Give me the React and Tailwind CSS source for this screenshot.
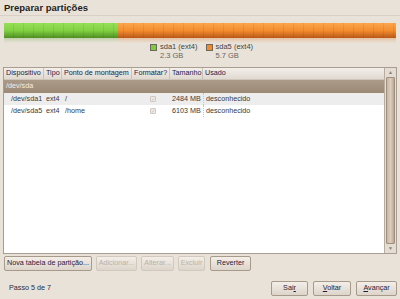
import React from "react";

const font = { fontFamily: '"Liberation Sans", "DejaVu Sans", sans-serif' };

function Bar() {
  const ticks = Array.from({ length: 40 });
  return (
    <div className="mx-[4px] mt-[7px]">
      <div className="relative flex h-[15px] overflow-hidden">
        <div className="w-[114px] bg-gradient-to-b from-[#96e058] via-[#82d142] to-[#4f8f22]" />
        <div className="flex-1 bg-gradient-to-b from-[#fca64e] via-[#f48d2e] to-[#b9581a]" />
        <div className="absolute inset-0 flex">
          {ticks.map((_, i) => (
            <div key={i} className="w-[10px] shrink-0 border-r border-[#00000010]" />
          ))}
        </div>
      </div>
      <div className="flex h-[5px]">
        <div className="w-[114px] bg-gradient-to-b from-[#b6c99a] to-transparent opacity-70" />
        <div className="flex-1 bg-gradient-to-b from-[#e5b48a] to-transparent opacity-70" />
      </div>
    </div>
  );
}

function Legend({ color, name, size }) {
  return (
    <div className="flex items-start gap-[3px]">
      <div className={`mt-[2px] h-[7px] w-[7px] border border-[#6f665c] ${color}`} />
      <div className="text-[7.5px] leading-[9px] text-[#444]">
        <div>{name}</div>
        <div className="text-[#666]">{size}</div>
      </div>
    </div>
  );
}

function Check() {
  return (
    <div className="flex h-[6px] w-[6px] items-center justify-center rounded-[1px] border border-[#cfc8c0] bg-[#eeeae6] text-[5px] leading-[5px] text-[#c0bab4]">
      ✓
    </div>
  );
}

const cols = "grid grid-cols-[40px_18px_70px_38px_33px_1fr]";

function Row({ dev, type, mount, size, used, bg }) {
  return (
    <div className={`${cols} h-[12px] items-center whitespace-nowrap text-[7.2px] text-[#3a3a3a] ${bg}`}>
      <div className="pl-[7px]">{dev}</div>
      <div className="pl-[2px]">{type}</div>
      <div className="pl-[3px]">{mount}</div>
      <div className="flex justify-center pl-[4px]"><Check /></div>
      <div className="pl-[2px]">{size}</div>
      <div className="flex h-full items-center border-l border-dotted border-[#b8c8da] pl-[2px]">{used}</div>
    </div>
  );
}

function Btn({ children, disabled, className = "" }) {
  return (
    <div
      className={`flex h-[15px] items-center justify-center whitespace-nowrap rounded-[2px] border bg-gradient-to-b from-[#f3eee8] to-[#ddd5cb] px-[3px] text-[7.2px] ${
        disabled ? "border-[#d2c9be] text-[#bbb1a6]" : "border-[#a79a8b] text-[#2a1a3a]"
      } ${className}`}
    >
      {children}
    </div>
  );
}

function Head({ children, last }) {
  return (
    <div className={`flex h-full items-center overflow-hidden pl-[2px] ${last ? "" : "border-r border-[#cbc2b7]"}`}>{children}</div>
  );
}

export default function App() {
  return (
    <div style={font} className="flex h-[299px] w-[400px] flex-col bg-[#e8e2d9]">
      <div className="border-b border-[#d8d0c6] px-[4px] pt-[2px] pb-[2px] text-[9.5px] font-bold leading-[11px] text-[#1e1e1e]">
        Preparar partições
      </div>
      <Bar />
      <div className="ml-[150px] mt-[-1px] flex gap-[8px]">
        <Legend color="bg-[#7dcc3c]" name="sda1 (ext4)" size="2.3 GB" />
        <Legend color="bg-[#f28a2a]" name="sda5 (ext4)" size="5.7 GB" />
      </div>

      <div className="mx-[3px] mt-[7px] flex h-[187px] border border-[#a89d90]">
        <div className="flex-1 bg-white">
          <div className={`${cols} h-[12px] items-center whitespace-nowrap border-b border-[#cfc6bb] bg-gradient-to-b from-[#f3efea] to-[#e0d9d0] text-[7.2px] text-[#23224a]`}>
            <Head>Dispositivo</Head>
            <Head>Tipo</Head>
            <Head>Ponto de montagem</Head>
            <Head>Formatar?</Head>
            <Head>Tamanho</Head>
            <Head last>Usado</Head>
          </div>
          <div className={`${cols} h-[13px] items-center bg-gradient-to-b from-[#ab9a88] to-[#9c8a77] text-[7.2px] text-[#f4eee8]`}>
            <div className="pl-[2px]">/dev/sda</div>
          </div>
          <Row dev="/dev/sda1" type="ext4" mount="/" size="2484 MB" used="desconhecido" bg="bg-[#ededed]" />
          <Row dev="/dev/sda5" type="ext4" mount="/home" size="6103 MB" used="desconhecido" bg="bg-white" />
        </div>
        <div className="flex w-[12px] flex-col border-l border-[#b9ada0] bg-[#e4ddd3]">
          <div className="flex h-[9px] items-center justify-center text-[5px] text-[#8a7f74]">▲</div>
          <div className="mx-[1px] flex-1 rounded-[1px] border border-[#a18f7e] bg-gradient-to-r from-[#c7b6a5] via-[#dccdbe] to-[#b9a693]" />
          <div className="flex h-[9px] items-center justify-center text-[5px] text-[#8a7f74]">▼</div>
        </div>
      </div>

      <div className="mx-[4px] mt-[2px] flex gap-[4px]">
        <Btn className="w-[88px]">Nova tabela de partição...</Btn>
        <Btn disabled className="w-[41px]">Adicionar...</Btn>
        <Btn disabled className="w-[33px]">Alterar...</Btn>
        <Btn disabled className="w-[27px]">Excluir</Btn>
        <Btn className="ml-[1px] w-[41px]">Reverter</Btn>
      </div>

      <div className="mt-auto mb-[3px] flex items-center px-[3px]">
        <div className="pl-[6px] text-[7.2px] text-[#2a2a3a]">Passo 5 de 7</div>
        <div className="ml-auto flex gap-[5px]">
          <Btn className="h-[14px] w-[37px]"><span>Sai<u>r</u></span></Btn>
          <Btn className="h-[14px] w-[38px]"><span><u>V</u>oltar</span></Btn>
          <Btn className="h-[14px] w-[41px]"><span><u>A</u>vançar</span></Btn>
        </div>
      </div>
    </div>
  );
}
